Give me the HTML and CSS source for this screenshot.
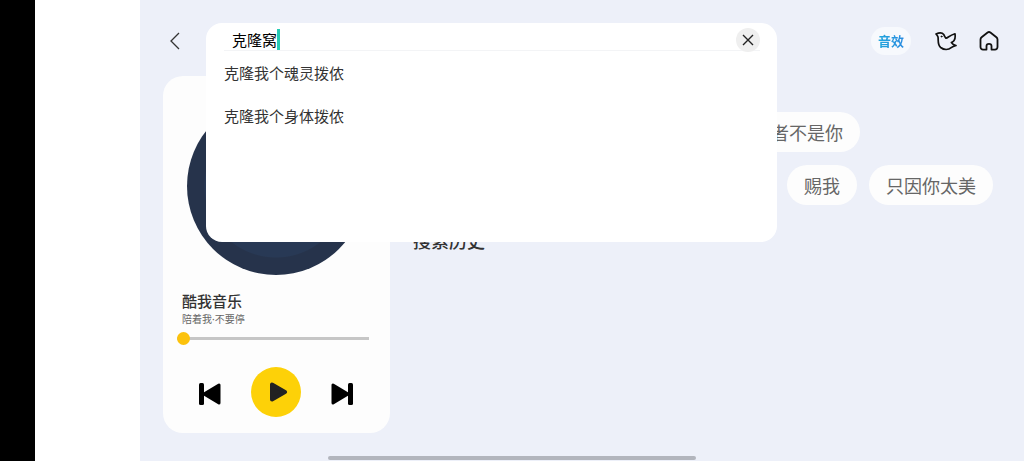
FILE: index.html
```html
<!DOCTYPE html>
<html lang="zh-CN">
<head>
    <meta charset="UTF-8">
    <meta name="viewport" content="width=device-width, initial-scale=1.0">
    <title>酷我音乐</title>
    <link rel="stylesheet" href="styles.css">
</head>
<body>
    <div class="cutout"></div>
    <div class="side"></div>
    <div class="app">
        <header class="header">
            <button class="icon-btn back" aria-label="返回">
                <svg width="12" height="20" viewBox="0 0 12 20"><path d="M10 2 2 10l8 8" fill="none" stroke="#333" stroke-width="1.3"/></svg>
            </button>
            <button class="effect"><span>音效</span></button>
            <button class="icon-btn bird" aria-label="驾驶模式">
                <svg width="22" height="20" viewBox="0 0 22 20" fill="none" stroke="#111" stroke-width="1.7" stroke-linejoin="round" stroke-linecap="round">
                    <path d="M1 3C4 1.600 7.200 1.400 8.700 3.600c.8 1.200 1 2.700 2.300 3.600C13 6.800 14 4.800 20 2.800c.4 3 .2 5.200-.9 6.700-.7 1-1.700 1.600-2.700 2 1 1.600 2.500 2.500 4.600 3-2 .6-3.500 1.200-4.800 2.200C13.500 19 9 19.200 5.700 16.500 2.200 13.500 3.600 9 3 6 2.700 4.800 2 4 1 3z"/>
                    <circle cx="6.500" cy="5.500" r=".5" fill="#111" stroke-width="1"/>
                </svg>
            </button>
            <button class="icon-btn" aria-label="主页">
                <svg width="20" height="20" viewBox="0 0 20 20" fill="none" stroke="#111" stroke-width="1.8" stroke-linejoin="round">
                    <path d="M7.500 18.600H4A2.500 2.500 0 0 1 1.500 16V8.500c0-1 .4-1.600 1.100-2.200l6-4.800c.9-.7 1.900-.7 2.800 0l6 4.800c.7.6 1.100 1.200 1.100 2.200V16A2.500 2.500 0 0 1 16 18.600h-3.500V15c0-2.800-5-2.800-5 0z"/>
                </svg>
            </button>

            <form class="search">
                <div class="field">
                    <input type="text" id="keyword" aria-label="搜索" value="克隆窝">
                    <span class="caret"></span>
                    <button type="button" class="clear" aria-label="清除">
                        <svg width="12" height="12" viewBox="0 0 12 12"><path d="M1 1l10 10M11 1 1 11" stroke="#222" stroke-width="1.4"/></svg>
                    </button>
                </div>
                <ul class="suggest">
                    <li><a href="#">克隆我个魂灵拨侬</a></li>
                    <li><a href="#">克隆我个身体拨侬</a></li>
                </ul>
            </form>
        </header>

        <main class="main">
            <section class="player">
                <div class="disc"></div>
                <h2>酷我音乐</h2>
                <p>陪着我·不要停</p>
                <input type="range" class="progress" min="0" max="100" value="0" aria-label="播放进度">
                <div class="controls">
                    <button class="icon-btn" aria-label="上一首">
                        <svg width="24" height="24" viewBox="0 0 24 24"><rect x="1" y="1" width="5" height="22" rx="1.5"/><path d="M21 3v18L6 12z" stroke="#000" stroke-width="3" stroke-linejoin="round"/></svg>
                    </button>
                    <button class="play" aria-label="播放">
                        <svg width="20" height="20" viewBox="0 0 20 20"><path d="M4 2.500v15L17 10z" fill="#222" stroke="#222" stroke-width="4" stroke-linejoin="round"/></svg>
                    </button>
                    <button class="icon-btn" aria-label="下一首">
                        <svg width="24" height="24" viewBox="0 0 24 24"><rect x="18" y="1" width="5" height="22" rx="1.5"/><path d="M3 3v18l15-9z" stroke="#000" stroke-width="3" stroke-linejoin="round"/></svg>
                    </button>
                </div>
            </section>

            <section class="content">
                <div class="tags first">
                    <button class="tag">者不是你</button>
                </div>
                <div class="tags">
                    <button class="tag">赐我</button>
                    <button class="tag">只因你太美</button>
                </div>
                <h2>搜索历史</h2>
            </section>
        </main>
    </div>
    <div class="home-bar"></div>
</body>
</html>
```

FILE: styles.css
```css
* { box-sizing: border-box; }
body {
    margin: 0;
    min-height: 100vh;
    display: flex;
    background: #fff;
    font-family: "Noto Sans CJK SC", sans-serif;
    color: #333;
}
h2, p, ul { margin: 0; padding: 0; }
button { border: 0; padding: 0; background: none; font-family: inherit; cursor: pointer; }
svg { display: block; }

.cutout { width: 35px; background: #000; }
.side { width: 105px; }
.app { flex: 1; background: #edf0f9; }

/* header */
.header {
    position: relative;
    display: flex;
    align-items: center;
    height: 76px;
    padding: 6px 25px 0 29px;
}
.back { margin-right: auto; }
.effect {
    height: 28px;
    padding: 0 7px;
    margin-right: 24px;
    border-radius: 14px;
    background: #f7f9fd;
    font-size: 13px;
    line-height: 26px;
    font-weight: 700;
}
.effect span {
    background: linear-gradient(90deg, #22a7dc, #2a8be0);
    background-clip: text;
    color: transparent;
}
.bird { margin-right: 22px; }

/* search panel */
.search {
    position: absolute;
    z-index: 1;
    top: 23px;
    left: 66px;
    right: 247px;
    height: 219px;
    padding: 0 17px 0 18px;
    border-radius: 16px;
    background: #fff;
}
.field {
    display: flex;
    align-items: flex-end;
    height: 28px;
    padding-left: 8px;
    border-bottom: 1px solid #f3f4f6;
}
.field input {
    width: 3em;
    height: 20px;
    padding: 0;
    border: 0;
    outline: 0;
    font: 15px/20px "Noto Sans CJK SC", sans-serif;
    color: #000;
}
.caret { width: 3px; height: 21px; background: #26cbb4; }
.clear {
    display: flex;
    align-items: center;
    justify-content: center;
    width: 24px;
    height: 24px;
    margin: 0 0 -2px auto;
    border-radius: 50%;
    background: #efefef;
}
.suggest { list-style: none; }
.suggest a {
    display: block;
    font-size: 15px;
    line-height: 43px;
    color: #333;
    text-decoration: none;
}

/* player */
.main {
    display: flex;
    align-items: flex-start;
    gap: 23px;
    padding: 0 31px 28px 23px;
}
.player {
    width: 227px;
    padding: 21px 20px 16px 19px;
    border-radius: 20px;
    background: #fdfdfd;
}
.disc {
    width: 178px;
    height: 178px;
    margin: 0 auto 16px;
    border-radius: 50%;
    background: radial-gradient(circle, #283955 71px, #26334b 72px);
}
.player h2 { font-size: 15px; font-weight: 500; line-height: 20px; }
.player p {
    font-family: "Noto Sans", "Noto Sans CJK SC", sans-serif;
    font-size: 10px;
    line-height: 16px;
    color: #666;
}
.progress {
    appearance: none;
    display: block;
    width: 192px;
    height: 13px;
    margin: 5px 0 22px -5px;
    background: linear-gradient(#c6c6c6, #c6c6c6) center / 100% 3px no-repeat;
}
.progress::-webkit-slider-thumb {
    appearance: none;
    width: 13px;
    height: 13px;
    border-radius: 50%;
    background: #fcc20c;
}
.controls {
    display: flex;
    align-items: center;
    justify-content: space-between;
    padding: 0 16px;
}
.controls .icon-btn { padding-top: 4px; }
.play {
    display: flex;
    align-items: center;
    justify-content: center;
    width: 50px;
    height: 50px;
    padding-left: 3px;
    border-radius: 50%;
    background: #fdd108;
}

/* hot words and history */
.content { flex: 1; padding-top: 36px; }
.tags {
    display: flex;
    justify-content: flex-end;
    gap: 12px;
    margin-bottom: 13px;
}
.first { padding-right: 133px; }
.tag {
    height: 40px;
    padding: 0 17px;
    border-radius: 20px;
    background: #fdfdfd;
    font-size: 18px;
    line-height: 38px;
    color: #666;
}
.content h2 { margin-top: 22px; font-size: 18px; font-weight: 500; line-height: 26px; }

.home-bar {
    position: fixed;
    bottom: 1px;
    left: 32%;
    right: 32%;
    height: 4px;
    border-radius: 2px;
    background: #b2b5bd;
}
```
